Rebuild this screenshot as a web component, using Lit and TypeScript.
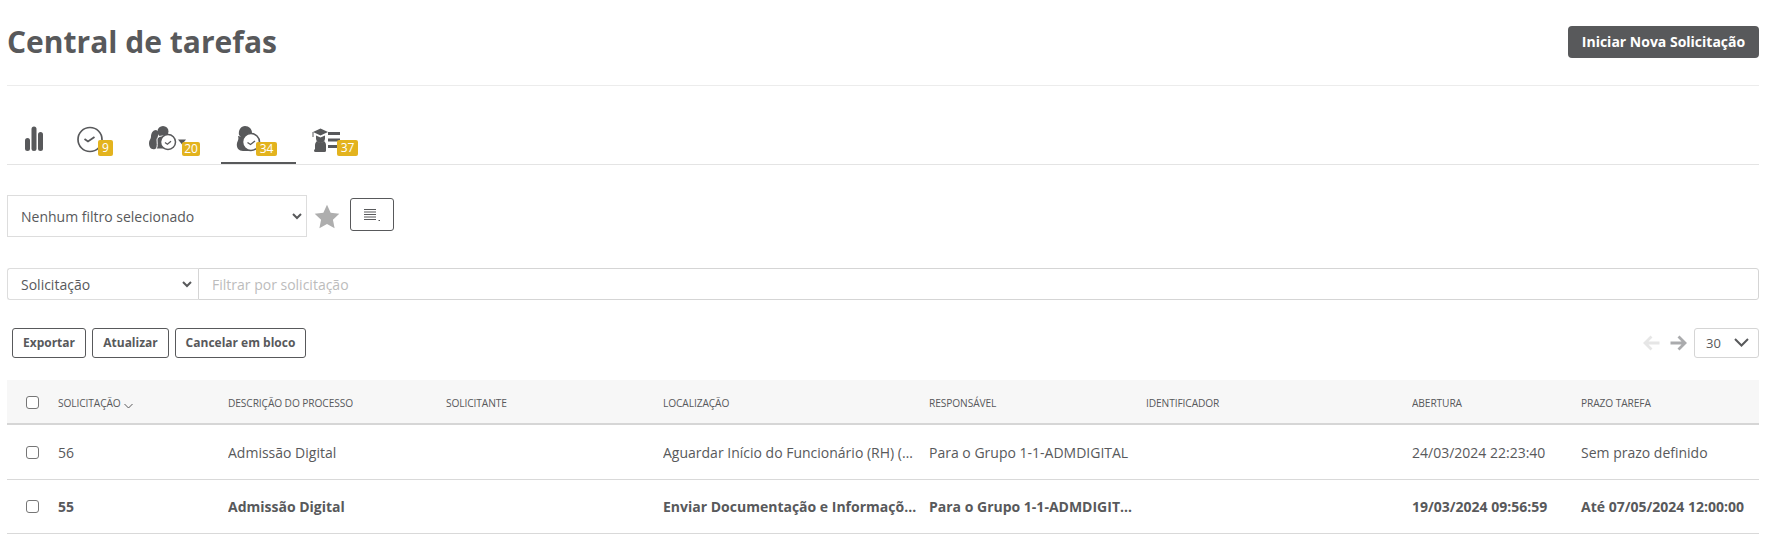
import { LitElement, html, css, svg } from "lit";
import { customElement } from "lit/decorators.js";

const C = "#58595b";

const columns = ["Solicitação", "Descrição do processo", "Solicitante", "Localização", "Responsável", "Identificador", "Abertura", "Prazo tarefa"];
const rows = [
  { bold: false, cells: ["56", "Admissão Digital", "", "Aguardar Início do Funcionário (RH) (Responsável)", "Para o Grupo 1-1-ADMDIGITAL", "", "24/03/2024 22:23:40", "Sem prazo definido"] },
  { bold: true, cells: ["55", "Admissão Digital", "", "Enviar Documentação e Informações do Funcionário", "Para o Grupo 1-1-ADMDIGITAL", "", "19/03/2024 09:56:59", "Até 07/05/2024 12:00:00"] },
];

const tabs = [
  { w: 51, badge: "", bx: 0, by: 0, bw: 0, icon: svg`<rect x="18" y="18" width="5" height="13" rx="2.5"/><rect x="24.500" y="6.500" width="5" height="24.500" rx="2.5"/><rect x="31" y="12" width="5" height="19" rx="2.5"/>` },
  { w: 73, badge: "9", bx: 40, by: 20, bw: 15, icon: svg`<circle cx="32" cy="19.500" r="12" fill="none" stroke="${C}" stroke-width="1.7"/><path d="M26.500 19l3.500 2.500 6.500-4.500" fill="none" stroke="${C}" stroke-width="1.8"/>` },
  { w: 90, badge: "20", bx: 51, by: 22, bw: 18, icon: svg`<path d="M25 10c3 1 3 4 2 6-1 1 0 3 1 5 1 3 0 8-4 8-4 1-6-2-6-6 0-3 2-4 2-6 0-4 2-7 5-7z"/><circle cx="32" cy="11.500" r="5.500"/><path d="M25 29c2-2 1-7 1-9 0-3 3-4 6-4h6v13z" stroke="#fff" stroke-width="1"/><circle cx="37" cy="22" r="7.500" fill="#fff" stroke="${C}" stroke-width="1.5"/><path d="M34 22.500l2.400 1.700 3.600-3" fill="none" stroke="${C}" stroke-width="1.300"/><path d="M47 19.500h8l-4 5z"/>` },
  { w: 75, badge: "34", bx: 35, by: 22, bw: 21, icon: svg`<path d="M24 6c4 0 7 3 7 7l-2 3-8 2-3-3c-1-5 2-9 6-9z"/><path d="M17 16c1 3 0 4-1 7-1 5 2 8 6 8h6l-2-12-4-2z"/><circle cx="30" cy="22" r="8.500" fill="#fff" stroke="${C}" stroke-width="1.600"/><path d="M26.500 22.500l3 2 4.500-3.500" fill="none" stroke="${C}" stroke-width="1.400"/>` },
  { w: 80, badge: "37", bx: 41, by: 20, bw: 21, icon: svg`<path d="M24.500 8.500l7.500 3.500-7.500 3.500L17 12z"/><path d="M20 15.500l4.500 2 4.500-2v3a4.500 4.500 0 0 1-9 0z"/><path d="M19 31v-6c0-2 1-3 2-4 2 2 5 2 7 0 1 1 2 2 2 4v6z"/><rect x="18" y="29" width="12" height="3" rx="1.500"/><rect x="32" y="12" width="12" height="3"/><rect x="32" y="18.500" width="12" height="3"/><rect x="32" y="25" width="9" height="3"/><path d="M17 12v5" stroke="${C}" stroke-width="1" fill="none"/>` },
];

const chevron = html`<svg class="chev" width="10" height="7" viewBox="0 0 10 7" fill="none" stroke="#58595b" stroke-width="2"><path d="M1 1l4 4 4-4"/></svg>`;

@customElement("app-root")
export class AppRoot extends LitElement {
  static styles = css`
    :host { display: block; padding: 0 8px 0 7px; font-family: "Open Sans", "Liberation Sans", sans-serif; color: #58595b; background: #fff; height: 535px; overflow: hidden; box-sizing: border-box; }
    .top { display: flex; justify-content: space-between; align-items: flex-start; height: 85px; border-bottom: 1px solid #ececec; }
    h1 { margin: 23px 0 0 0; font-size: 30px; line-height: 38px; font-weight: 700; color: #58595b; }
    .primary { margin-top: 26px; width: 191px; height: 32px; background: #58595b; color: #fff; border: 0; border-radius: 4px; font: 700 14px/32px "Open Sans", sans-serif; padding: 0; }
    .tabs { display: flex; height: 44px; margin-top: 34px; border-bottom: 1px solid #e4e4e4; }
    .tab { position: relative; height: 44px; box-sizing: border-box; flex: none; }
    .tab svg { display: block; width: 70px; height: 40px; fill: #58595b; }
    .tab.active::after { content: ""; position: absolute; left: 0; right: 0; bottom: 0; height: 2px; background: #58595b; }
    .badge { position: absolute; bottom: 8px; box-sizing: border-box; background: #e3b31e; color: #fff; font-size: 12px; text-align: center; border-radius: 2px; }
    .filter { display: flex; align-items: center; margin-top: 30px; height: 42px; }
    .sel { position: relative; flex: none; box-sizing: border-box; }
    .chev { position: absolute; top: 50%; margin-top: -3px; right: 5px; pointer-events: none; }
    select { appearance: none; width: 100%; display: block; font-family: "Open Sans", sans-serif; font-size: 14px; color: #58595b; background: #fff; border: 1px solid #ddd; outline: none; box-sizing: border-box; }
    .filter .sel { width: 300px; }
    .filter select { height: 42px; padding-left: 13px; }
    .star { width: 26px; height: 25px; margin: 0 10px 0 7px; fill: #aeaeae; display: block; }
    .icon-btn { width: 44px; height: 33px; margin-top: -3px; border: 1px solid #58595b; border-radius: 3px; background: #fff; box-sizing: border-box; padding: 0; display: flex; align-items: center; justify-content: center; }
    .search { display: flex; margin-top: 31px; height: 32px; }
    .search .sel { width: 191px; }
    .search .chev { right: 6px; }
    .search select { height: 32px; padding-left: 13px; border-radius: 3px 0 0 3px; border-right: 0; }
    .search input { flex: 1; height: 32px; box-sizing: border-box; border: 1px solid #d5d5d5; border-radius: 0 3px 3px 0; padding: 0 13px; font: 14px "Open Sans", sans-serif; outline: none; }
    .search input::placeholder { color: #bcbcbc; opacity: 1; }
    .actions { display: flex; align-items: center; justify-content: space-between; margin-top: 27px; height: 31px; }
    .btns { display: flex; gap: 6px; margin-left: 5px; }
    .btn { height: 30px; border: 1px solid #58595b; border-radius: 3px; background: #fff; color: #58595b; font: 700 12px/28px "Open Sans", sans-serif; padding: 0; box-sizing: border-box; }
    .pager { display: flex; align-items: center; }
    .arrow { width: 17px; height: 16px; display: block; fill: none; stroke-width: 2.800; }
    .arrow.off { stroke: #e6e6e6; margin-right: 10px; }
    .arrow.on { stroke: #aaabad; margin-right: 7px; }
    .size { width: 65px; height: 30px; border: 1px solid #d5d5d5; border-radius: 3px; box-sizing: border-box; display: flex; align-items: center; justify-content: space-between; padding: 0 9px 0 11px; font-size: 13px; }
    .grid { display: grid; grid-template-columns: 51px 170px 218px 217px 266px 217px 266px 169px 178px; align-items: center; box-sizing: border-box; }
    .head { margin-top: 22px; height: 45px; padding-top: 2px; background: #f7f7f7; border-bottom: 2px solid #d6d6d6; font-size: 10.200px; text-transform: uppercase; letter-spacing: -0.100px; }
    .row { height: 54px; border-bottom: 1px solid #d9d9d9; font-size: 14px; }
    .row.first { height: 55px; }
    .row.b { font-weight: 700; }
    .cell { overflow: hidden; white-space: nowrap; text-overflow: ellipsis; padding-right: 10px; }
    .row .cell:last-child { padding-right: 0; overflow: visible; }
    .check { padding-left: 19px; display: flex; }
    .box { width: 13px; height: 13px; margin: 0; appearance: none; border: 1px solid #767676; border-radius: 3px; background: #fff; display: block; }
    .sort { display: inline-block; vertical-align: -2px; margin-left: 3px; }
  `;

  render() {
    return html`
      <div class="top">
        <h1>Central de tarefas</h1>
        <button class="primary">Iniciar Nova Solicitação</button>
      </div>
      <div class="tabs">
        ${tabs.map((t, i) => html`
          <div class="tab ${i === 3 ? "active" : ""}" style="width:${t.w}px">
            <svg viewBox="0 0 70 40">${t.icon}</svg>
            ${t.badge ? html`<span class="badge" style="left:${t.bx}px;width:${t.bw}px;height:${36 - t.by}px;line-height:${36 - t.by}px">${t.badge}</span>` : ""}
          </div>`)}
      </div>
      <div class="filter">
        <div class="sel"><select><option>Nenhum filtro selecionado</option></select>${chevron}</div>
        <svg class="star" viewBox="0 0 24 24"><path d="M12 .8l3.500 7.600 8.300 1-6.100 5.700 1.600 8.200L12 19.200 4.700 23.300l1.600-8.200L.2 9.400l8.300-1z"/></svg>
        <button class="icon-btn" aria-label="Colunas">
          <svg width="18" height="14" viewBox="0 0 18 14" fill="none" stroke="#58595b" stroke-width="1"><path d="M1 1.500h12M1 4h12M1 6.500h12M1 9h12M1 11.500h12"/><path d="M15.500 12.500h1.500"/></svg>
        </button>
      </div>
      <div class="search">
        <div class="sel"><select><option>Solicitação</option></select>${chevron}</div>
        <input placeholder="Filtrar por solicitação" />
      </div>
      <div class="actions">
        <div class="btns">
          <button class="btn" style="width:74px">Exportar</button>
          <button class="btn" style="width:77px">Atualizar</button>
          <button class="btn" style="width:131px">Cancelar em bloco</button>
        </div>
        <div class="pager">
          <svg class="arrow off" viewBox="0 0 17 16"><path d="M16.500 8H2M8.500 1.500L2 8l6.500 6.500"/></svg>
          <svg class="arrow on" viewBox="0 0 17 16"><path d="M.5 8H15M8.500 1.500L15 8l-6.500 6.500"/></svg>
          <div class="size"><span>30</span>
            <svg width="15" height="9" viewBox="0 0 15 9" fill="none" stroke="#58595b" stroke-width="2"><path d="M1 1l6.500 6.500L14 1"/></svg>
          </div>
        </div>
      </div>
      <div class="grid head">
        <div class="check"><input class="box" type="checkbox" /></div>
        ${columns.map((c, i) => html`<div class="cell">${c}${i === 0 ? html`<svg class="sort" width="9" height="6" viewBox="0 0 9 6" fill="none" stroke="#58595b"><path d="M.5 1l4 4 4-4"/></svg>` : ""}</div>`)}
      </div>
      ${rows.map((r, i) => html`
        <div class="grid row ${r.bold ? "b" : ""} ${i === 0 ? "first" : ""}">
          <div class="check"><input class="box" type="checkbox" /></div>
          ${r.cells.map((c) => html`<div class="cell">${c}</div>`)}
        </div>`)}
    `;
  }
}
